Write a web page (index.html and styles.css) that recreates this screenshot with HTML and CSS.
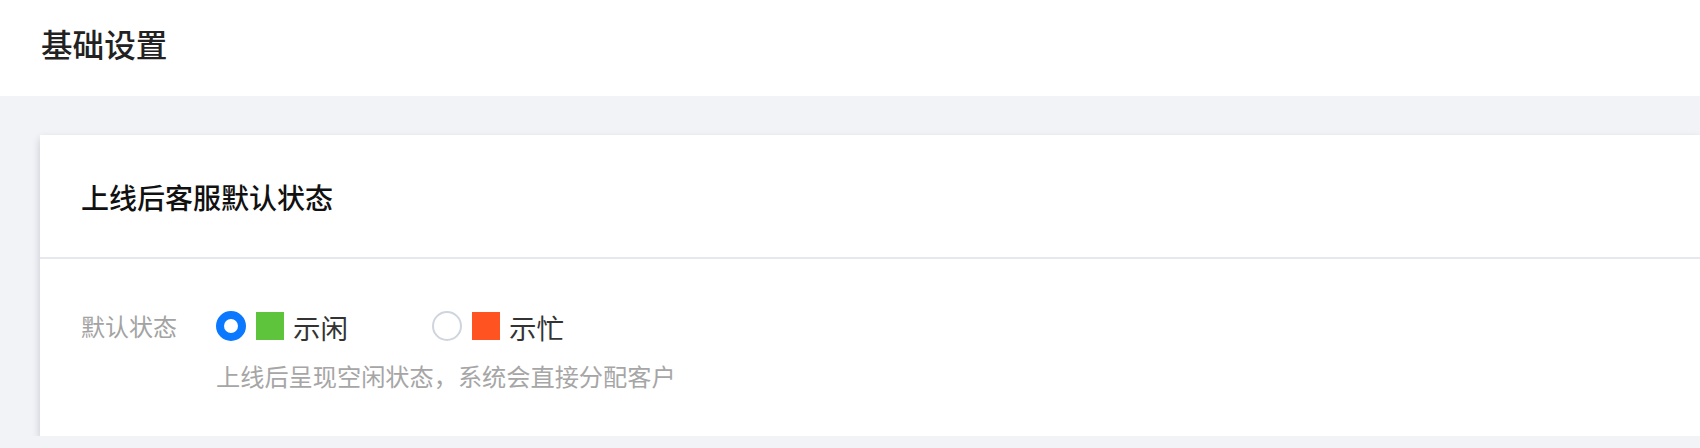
FILE: index.html
```html
<!DOCTYPE html>
<html lang="zh-CN">
<head>
<meta charset="utf-8">
<title>基础设置</title>
<link rel="stylesheet" href="styles.css">
</head>
<body>
<header class="page-header">
  <h1 class="page-title">基础设置</h1>
</header>
<main class="page-main">
  <section class="card">
    <div class="card-head">
      <h2 class="card-title">上线后客服默认状态</h2>
    </div>
    <div class="card-body">
      <div class="form-row">
        <span class="form-label">默认状态</span>
        <div class="radio-group">
          <label class="radio-option">
            <span class="radio radio-checked"></span>
            <span class="swatch swatch-green"></span>
            <span class="option-text">示闲</span>
          </label>
          <label class="radio-option">
            <span class="radio"></span>
            <span class="swatch swatch-orange"></span>
            <span class="option-text">示忙</span>
          </label>
        </div>
      </div>
      <p class="form-hint">上线后呈现空闲状态，系统会直接分配客户</p>
    </div>
  </section>
</main>
</body>
</html>
```
FILE: styles.css
```css
* { box-sizing: border-box; }
html, body { margin: 0; padding: 0; }
body {
  background: #f2f3f7;
  font-family: "Noto Sans CJK SC", "Noto Sans", sans-serif;
  overflow: hidden;
}
.page-header {
  background: #ffffff;
  height: 96px;
  padding: 24px 41px 0;
}
.page-title {
  margin: 0;
  font-size: 31.6px;
  line-height: 38px;
  font-weight: 500;
  color: #222222;
}
.page-main {
  padding: 39px 0 0 40px;
}
.card {
  background: #ffffff;
  height: 301px;
  box-shadow: 0 4px 8px rgba(20, 30, 50, 0.2);
}
.card-head {
  height: 124px;
  padding: 42px 41px 0;
  border-bottom: 2px solid #e6e8ee;
}
.card-title {
  margin: 0;
  font-size: 28px;
  line-height: 40px;
  font-weight: 500;
  color: #111111;
}
.card-body {
  padding: 52px 41px 0;
}
.form-row {
  display: flex;
  align-items: center;
  height: 30px;
}
.form-label {
  width: 135px;
  font-size: 24px;
  line-height: 30px;
  color: #a3a3a3;
}
.radio-group {
  display: flex;
  align-items: center;
  gap: 84px;
}
.radio-option {
  display: flex;
  align-items: center;
}
.radio {
  width: 30px;
  height: 30px;
  border-radius: 50%;
  border: 2px solid #cfd4de;
  background: #ffffff;
  margin-right: 10px;
}
.radio-checked {
  border: 8.5px solid #0a78ff;
}
.swatch {
  width: 28px;
  height: 28px;
  margin-right: 9px;
}
.swatch-green { background: #5ec43c; }
.swatch-orange { background: #ff5322; }
.option-text {
  font-size: 27.5px;
  line-height: 30px;
  color: #333333;
  padding-top: 2px;
}
.form-hint {
  margin: 20px 0 0 135px;
  font-size: 24.2px;
  line-height: 30px;
  color: #a6a6a6;
}
```
